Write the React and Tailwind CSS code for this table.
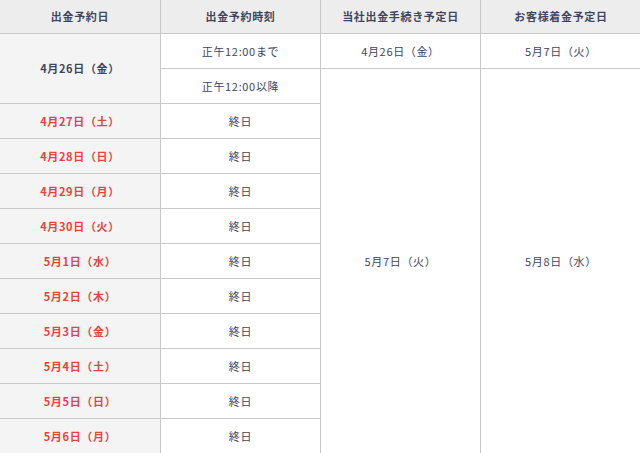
const rows = [
  ['4月27日（土）'], ['4月28日（日）'], ['4月29日（月）'], ['4月30日（火）'],
  ['5月1日（水）'], ['5月2日（木）'], ['5月3日（金）'], ['5月4日（土）'],
  ['5月5日（日）'], ['5月6日（月）'],
]

const cell = 'border border-[#c9c9c9] text-center align-middle h-[35px] p-0'

export default function App() {
  return (
    <div className="w-[640px] h-[453px] overflow-hidden bg-white text-[11px] tracking-[0.06em] text-[#41465e]"
      style={{ fontFamily: '"Noto Sans CJK JP", "Noto Sans", sans-serif' }}>
      <table className="w-[642px] -ml-px -mt-[2px] border-collapse table-fixed">
        <colgroup>
          <col className="w-[161px]" />
          <col className="w-[160px]" />
          <col className="w-[160px]" />
          <col className="w-[161px]" />
        </colgroup>
        <thead>
          <tr className="bg-[#ededed] font-bold">
            <th className={cell}>出金予約日</th>
            <th className={cell}>出金予約時刻</th>
            <th className={cell}>当社出金手続き予定日</th>
            <th className={cell}>お客様着金予定日</th>
          </tr>
        </thead>
        <tbody>
          <tr>
            <td rowSpan={2} className={cell + ' bg-[#f4f4f4] font-bold'}>4月26日（金）</td>
            <td className={cell}>正午12:00まで</td>
            <td className={cell}>4月26日（金）</td>
            <td className={cell}>5月7日（火）</td>
          </tr>
          <tr>
            <td className={cell}>正午12:00以降</td>
            <td rowSpan={11} className={cell}>5月7日（火）</td>
            <td rowSpan={11} className={cell}>5月8日（水）</td>
          </tr>
          {rows.map(([d]) => (
            <tr key={d}>
              <td className={cell + ' bg-[#f4f4f4] font-bold text-[#e8423c]'}>{d}</td>
              <td className={cell}>終日</td>
            </tr>
          ))}
        </tbody>
      </table>
    </div>
  )
}
